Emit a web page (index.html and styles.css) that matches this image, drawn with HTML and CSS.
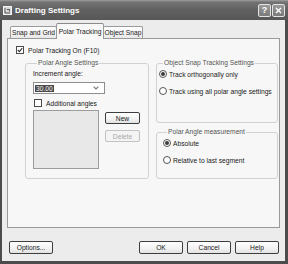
FILE: index.html
```html
<!DOCTYPE html>
<html>
<head>
<meta charset="utf-8">
<link rel="stylesheet" href="styles.css">
</head>
<body>
<div class="window">
  <div class="titlebar">
    <span class="app-icon">
      <svg width="9" height="9" viewBox="0 0 9 9"><rect x="0.5" y="0.5" width="8" height="8" fill="#d8d8d8" stroke="#f4f4f4"/><path d="M2 2v5M2 7h5M4 3.5h2.5v2" fill="none" stroke="#555" stroke-width="1"/></svg>
    </span>
    <span class="title">Drafting Settings</span>
    <span class="tb-btn help">?</span>
    <span class="tb-btn close"><svg width="7" height="7" viewBox="0 0 7 7"><path d="M1 1l5 5M6 1l-5 5" stroke="#fff" stroke-width="1.4"/></svg></span>
  </div>
  <div class="client">
    <div class="tabs">
      <div class="tab t1">Snap and Grid</div>
      <div class="tab t2 active">Polar Tracking</div>
      <div class="tab t3">Object Snap</div>
    </div>
    <div class="panel">
      <div class="check-row top-check"><span class="cb checked"><svg width="6" height="6" viewBox="0 0 6 6"><path d="M0.8 3l1.6 1.6L5.2 1.2" fill="none" stroke="#333" stroke-width="1.1"/></svg></span><span>Polar Tracking On (F10)</span></div>
      <div class="cols">
        <fieldset class="group g-left">
          <legend>Polar Angle Settings</legend>
          <div class="label">Increment angle:</div>
          <div class="combo"><span class="sel">30.00</span><span class="arrow"><svg width="6" height="4" viewBox="0 0 6 4"><path d="M0.6 0.6L3 3 5.4 0.6" fill="none" stroke="#777" stroke-width="1.1"/></svg></span></div>
          <div class="check-row add"><span class="cb"></span><span>Additional angles</span></div>
          <div class="list-row">
            <div class="listbox"></div>
            <div class="list-btns">
              <div class="btn small">New</div>
              <div class="btn small disabled">Delete</div>
            </div>
          </div>
        </fieldset>
        <div class="right-col">
          <fieldset class="group g-snap">
            <legend>Object Snap Tracking Settings</legend>
            <div class="radio-row"><span class="rb on"></span><span>Track orthogonally only</span></div>
            <div class="radio-row"><span class="rb"></span><span>Track using all polar angle settings</span></div>
          </fieldset>
          <fieldset class="group g-meas">
            <legend>Polar Angle measurement</legend>
            <div class="radio-row"><span class="rb on"></span><span>Absolute</span></div>
            <div class="radio-row"><span class="rb"></span><span>Relative to last segment</span></div>
          </fieldset>
        </div>
      </div>
    </div>
    <div class="footer">
      <div class="btn foot options">Options...</div>
      <div class="spacer"></div>
      <div class="btn foot">OK</div>
      <div class="btn foot">Cancel</div>
      <div class="btn foot">Help</div>
    </div>
  </div>
</div>
</body>
</html>
```

FILE: styles.css
```css
* { box-sizing: border-box; }
html, body { margin: 0; padding: 0; }
body {
  width: 288px; height: 264px; overflow: hidden; background: #fff;
  font-family: "Liberation Sans", Arial, sans-serif; font-size: 6.7px; color: #1a1a1a;
}
.window {
  width: 288px; height: 264px; display: flex; flex-direction: column;
  background: #4c4c4c;
}
.titlebar {
  height: 20px; flex: none; display: flex; align-items: center;
  padding: 0 3px 0 3px;
  background: linear-gradient(#a0a0a0 0, #747474 2px, #626262 9px, #575757 20px);
  color: #fff;
}
.app-icon { width: 9px; height: 9px; display: flex; margin-right: 3px; }
.title { flex: 1; font-weight: bold; font-size: 8px; }
.tb-btn {
  width: 13px; height: 13px; margin-left: 1px; border: 1px solid #e4e4e4; border-radius: 2px;
  background: linear-gradient(#9a9a9a, #7a7a7a);
  display: flex; align-items: center; justify-content: center;
  font-weight: bold; font-size: 9px; color: #fff;
}
.client {
  flex: 1; margin: 0 3px 3px 2px; background: #ececec;
  display: flex; flex-direction: column; padding: 3px 5px 0 5px;
}
.tabs { display: flex; align-items: flex-end; height: 15px; padding-left: 3px; position: relative; z-index: 1; }
.tab {
  height: 12px; border: 1px solid #9a9a9a; border-bottom: none; border-radius: 2px 2px 0 0;
  background: linear-gradient(#ffffff, #e8e8e8);
  display: flex; align-items: center; justify-content: center; white-space: nowrap;
}
.t1 { width: 47px; }
.t2 { width: 48px; }
.t3 { width: 40px; }
.tab.active { height: 16px; margin: 0 -1px -1px; background: #f8f8f8; border-top-color: #8a8a8a; }
.panel {
  height: 190px; flex: none; border: 1px solid #9a9a9a; background: #f7f7f7;
  padding: 7px 0 0 8px; display: flex; flex-direction: column;
}
.check-row { display: flex; align-items: center; height: 8px; white-space: nowrap; }
.cb {
  width: 8px; height: 8px; border: 1px solid #4a4a4a; background: #fff; margin-right: 4px;
  display: flex; align-items: center; justify-content: center; flex: none;
}
.top-check { margin-left: 0; margin-bottom: 5px; }
.cols { display: grid; grid-template-columns: 124px 122px; column-gap: 7px; margin-left: 9px; }
.group { margin: 0; padding: 0; border: 1px solid #d2d2d2; border-radius: 3px; min-width: 0; }
.group legend {
  padding: 0 1px; margin-left: 4px; line-height: 8px; height: 8px; color: #555; font-size: 6.7px;
}
.g-left { height: 120px; padding: 3px 0 0 7px; }
.label { line-height: 8px; height: 8px; }
.combo {
  margin-top: 4px; width: 72px; height: 12px; border: 1px solid #8e8e8e; background: #fff;
  display: flex; align-items: center; padding-left: 1px;
}
.sel { background: #4a4a4a; color: #f2f2f2; line-height: 7px; padding: 0 1px; }
.arrow { margin-left: auto; width: 14px; height: 10px; display: flex; align-items: center; justify-content: center; margin-right: 1px; }
.add { margin-top: 5px; margin-left: 1px; }
.list-row { display: flex; margin-top: 3px; }
.listbox { width: 66px; height: 59px; border: 1px solid #9c9c9c; background: #e8e8e8; }
.list-btns { display: flex; flex-direction: column; gap: 6px; margin-left: 6px; margin-top: 2px; }
.btn {
  border: 1px solid #3e3e3e; border-radius: 2px;
  background: linear-gradient(#ffffff, #f2f2f2 60%, #e2e2e2);
  display: flex; align-items: center; justify-content: center; color: #1a1a1a;
}
.btn.small { width: 35px; height: 12px; }
.btn.disabled { border-color: #c2c2c2; color: #a8a8a8; background: #f4f4f4; }
.right-col { display: flex; flex-direction: column; gap: 5px; }
.g-snap { height: 64px; padding: 2px 0 0 2px; }
.g-meas { height: 51px; padding: 2px 0 0 6px; }
.radio-row { display: flex; align-items: center; height: 10px; white-space: nowrap; }
.radio-row + .radio-row { margin-top: 7px; }
.rb {
  width: 8px; height: 8px; border: 1px solid #555; border-radius: 50%; background: #fff;
  margin-right: 2px; flex: none; display: flex; align-items: center; justify-content: center;
}
.rb.on::after { content: ""; width: 4px; height: 4px; border-radius: 50%; background: #3c3c3c; }
.footer { display: flex; margin-top: 13px; padding: 0 1px 0 2px; gap: 4px; }
.spacer { flex: 1; }
.btn.foot { width: 44px; height: 13px; }
```
